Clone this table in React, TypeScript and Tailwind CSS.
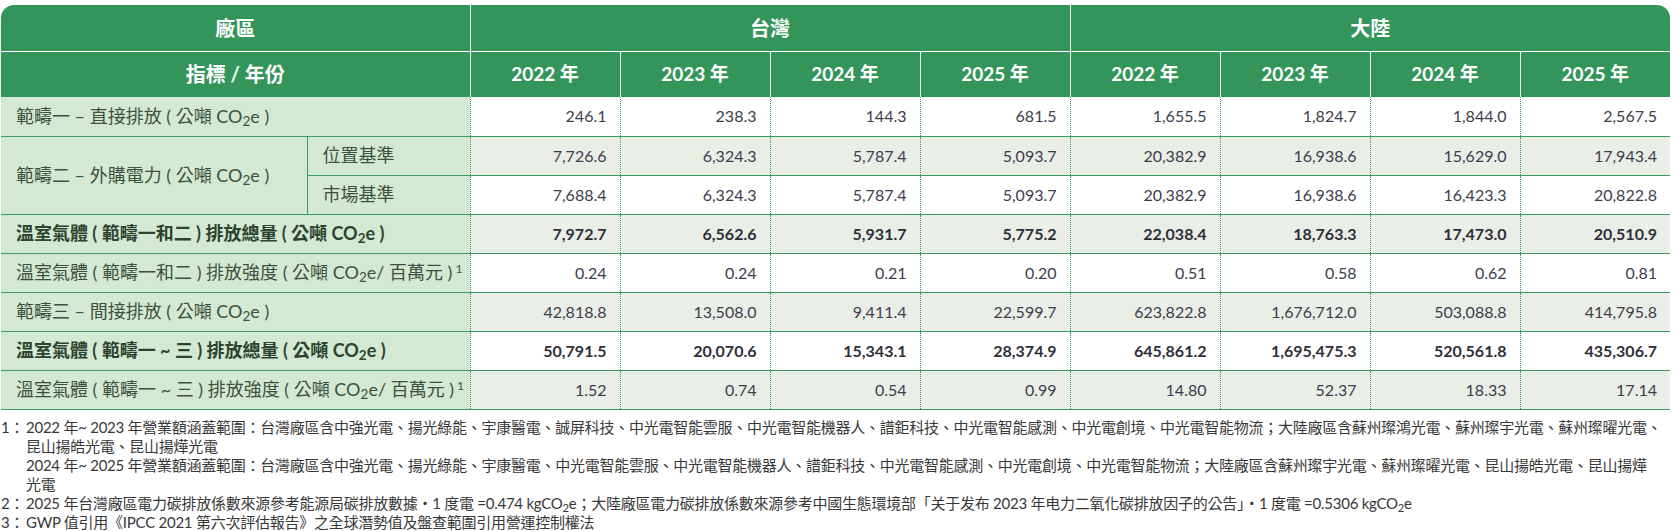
import React from "react";

const Co2 = () => (
    <>
        CO<sub>2</sub>e
    </>
);

type DataRow = {
    label?: React.ReactNode;
    sub?: string;
    values: string[];
    bold?: boolean;
    shade?: boolean;
};

const rows: DataRow[] = [
    {
        label: (
            <>
                範疇一 – 直接排放 ( 公噸 <Co2 /> )
            </>
        ),
        values: ["246.1", "238.3", "144.3", "681.5", "1,655.5", "1,824.7", "1,844.0", "2,567.5"],
    },
    {
        sub: "位置基準",
        values: ["7,726.6", "6,324.3", "5,787.4", "5,093.7", "20,382.9", "16,938.6", "15,629.0", "17,943.4"],
        shade: true,
    },
    {
        sub: "市場基準",
        values: ["7,688.4", "6,324.3", "5,787.4", "5,093.7", "20,382.9", "16,938.6", "16,423.3", "20,822.8"],
    },
    {
        label: (
            <>
                溫室氣體 ( 範疇一和二 ) 排放總量 ( 公噸 <Co2 /> )
            </>
        ),
        values: ["7,972.7", "6,562.6", "5,931.7", "5,775.2", "22,038.4", "18,763.3", "17,473.0", "20,510.9"],
        bold: true,
        shade: true,
    },
    {
        label: (
            <>
                溫室氣體 ( 範疇一和二 ) 排放強度 ( 公噸 <Co2 />/ 百萬元 )
                <sup className="text-[12px] ml-[3px]">1</sup>
            </>
        ),
        values: ["0.24", "0.24", "0.21", "0.20", "0.51", "0.58", "0.62", "0.81"],
    },
    {
        label: (
            <>
                範疇三 – 間接排放 ( 公噸 <Co2 /> )
            </>
        ),
        values: ["42,818.8", "13,508.0", "9,411.4", "22,599.7", "623,822.8", "1,676,712.0", "503,088.8", "414,795.8"],
        shade: true,
    },
    {
        label: (
            <>
                溫室氣體 ( 範疇一 ~ 三 ) 排放總量 ( 公噸 <Co2 /> )
            </>
        ),
        values: ["50,791.5", "20,070.6", "15,343.1", "28,374.9", "645,861.2", "1,695,475.3", "520,561.8", "435,306.7"],
        bold: true,
    },
    {
        label: (
            <>
                溫室氣體 ( 範疇一 ~ 三 ) 排放強度 ( 公噸 <Co2 />/ 百萬元 )
                <sup className="text-[12px] ml-[3px]">1</sup>
            </>
        ),
        values: ["1.52", "0.74", "0.54", "0.99", "14.80", "52.37", "18.33", "17.14"],
        shade: true,
    },
];

const years = ["2022 年", "2023 年", "2024 年", "2025 年"];

// one footnote line, fixed height so the CJK fallback font can't stretch it
const Line = ({ children }: { children: React.ReactNode }) => (
    <div className="h-[19.2px] whitespace-nowrap">{children}</div>
);

export default function App() {
    return (
        <div
            className="bg-white min-h-screen pt-[5px] pl-[1px]"
            style={{ fontFamily: "Lato, 'Noto Sans CJK TC', sans-serif" }}
        >
            <div className="w-[1669px] rounded-t-[13px] overflow-hidden">
                <table className="w-[1669px] table-fixed border-collapse">
                    <colgroup>
                        <col className="w-[306px]" />
                        <col className="w-[163px]" />
                        {Array.from({ length: 8 }).map((_, i) => (
                            <col key={i} className="w-[150px]" />
                        ))}
                    </colgroup>
                    <thead className="text-white font-bold">
                        <tr className="bg-[#33955a] h-[46px] border-b border-white">
                            <th colSpan={2} className="text-[20px] font-bold">
                                廠區
                            </th>
                            <th colSpan={4} className="text-[20px] font-bold border-l border-white">
                                台灣
                            </th>
                            <th colSpan={4} className="text-[20px] font-bold border-l border-white">
                                大陸
                            </th>
                        </tr>
                        <tr className="bg-[#33955a] h-[46px]">
                            <th colSpan={2} className="text-[20px] font-bold">
                                指標 / 年份
                            </th>
                            {[...years, ...years].map((y, i) => (
                                <th key={i} className="text-[19px] font-bold border-l border-white">
                                    {y}
                                </th>
                            ))}
                        </tr>
                    </thead>
                    <tbody>
                        {rows.map((r, i) => (
                            <tr key={i} className="h-[39px] border-b border-[#3e9a5e]">
                                {r.label && (
                                    <td
                                        colSpan={2}
                                        className={`bg-[#d3e9d4] pl-[15px] text-[18px] whitespace-nowrap ${
                                            r.bold ? "font-bold text-[#2c4330]" : "text-[#3c5140]"
                                        }`}
                                    >
                                        {r.label}
                                    </td>
                                )}
                                {r.sub && i === 1 && (
                                    <td
                                        rowSpan={2}
                                        className="bg-[#d3e9d4] pl-[15px] text-[18px] text-[#3c5140] whitespace-nowrap border-r border-[#3e9a5e]"
                                    >
                                        範疇二 – 外購電力 ( 公噸 <Co2 /> )
                                    </td>
                                )}
                                {r.sub && (
                                    <td className="bg-[#d3e9d4] pl-[15px] text-[18px] text-[#3c5140] whitespace-nowrap">
                                        {r.sub}
                                    </td>
                                )}
                                {r.values.map((v, j) => (
                                    <td
                                        key={j}
                                        className={`text-right pr-[13px] text-[16px] border-l border-dotted border-[#3e9a5e] ${
                                            r.shade ? "bg-[#e9eee7]" : "bg-white"
                                        } ${r.bold ? "font-bold text-[#2f2f38]" : "text-[#3d3d4c]"}`}
                                    >
                                        {v}
                                    </td>
                                ))}
                            </tr>
                        ))}
                    </tbody>
                </table>
            </div>

            {/* 註解 */}
            <div className="mt-[8px] text-[15px] leading-[19.2px] tracking-[-0.25px] text-[#383838]">
                <div className="flex">
                    <span className="shrink-0 w-[25px]">1：</span>
                    <div>
                        <Line>
                            2022 年~ 2023 年營業額涵蓋範圍：台灣廠區含中強光電、揚光綠能、宇康醫電、誠屏科技、中光電智能雲服、中光電智能機器人、譜鉅科技、中光電智能感測、中光電創境、中光電智能物流；大陸廠區含蘇州璨鴻光電、蘇州璨宇光電、蘇州璨曜光電、
                        </Line>
                        <Line>昆山揚皓光電、昆山揚燁光電</Line>
                        <Line>
                            2024 年~ 2025 年營業額涵蓋範圍：台灣廠區含中強光電、揚光綠能、宇康醫電、中光電智能雲服、中光電智能機器人、譜鉅科技、中光電智能感測、中光電創境、中光電智能物流；大陸廠區含蘇州璨宇光電、蘇州璨曜光電、昆山揚皓光電、昆山揚燁
                        </Line>
                        <Line>光電</Line>
                    </div>
                </div>
                <div className="flex">
                    <span className="shrink-0 w-[25px]">2：</span>
                    <Line>
                        2025 年台灣廠區電力碳排放係數來源參考能源局碳排放數據‧1 度電 =0.474 kgCO<sub>2</sub>e；大陸廠區電力碳排放係數來源參考中國生態環境部「关于发布 2023 年电力二氧化碳排放因子的公告」‧1 度電 =0.5306 kgCO<sub>2</sub>e
                    </Line>
                </div>
                <div className="flex">
                    <span className="shrink-0 w-[25px]">3：</span>
                    <Line>GWP 值引用《IPCC 2021 第六次評估報告》之全球潛勢值及盤查範圍引用營運控制權法</Line>
                </div>
            </div>
        </div>
    );
}
